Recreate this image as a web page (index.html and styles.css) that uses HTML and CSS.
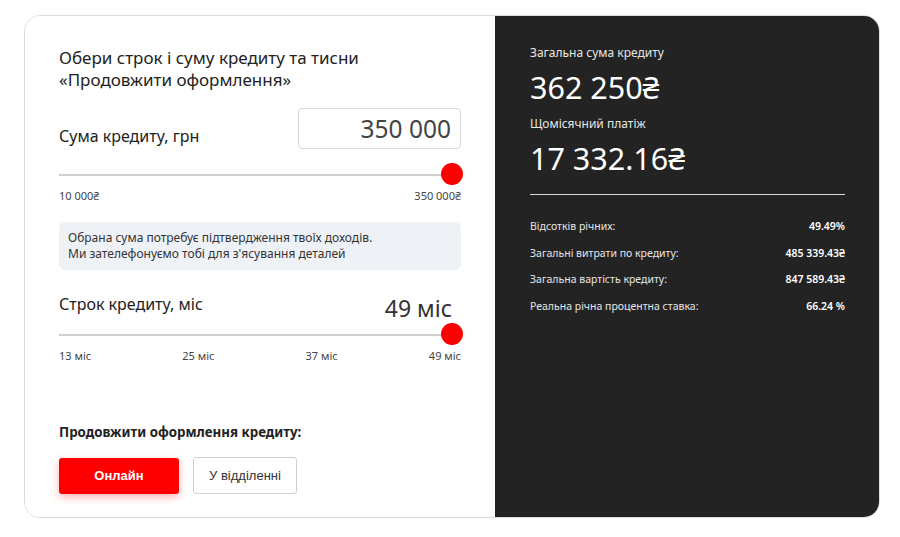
FILE: index.html
```html
<!DOCTYPE html>
<html lang="uk">
<head>
    <meta charset="UTF-8">
    <meta name="viewport" content="width=device-width, initial-scale=1.0">
    <title>Кредит</title>
    <link rel="stylesheet" href="styles.css">
</head>
<body>
    <div class="card">
        <div class="calc">
            <div class="title">Обери строк і суму кредиту та тисни<br>«Продовжити оформлення»</div>

            <div class="field-row">
                <div class="field-label">Сума кредиту, грн</div>
                <div class="amount-box">350 000</div>
            </div>
            <div class="slider">
                <div class="track"></div>
                <div class="thumb"></div>
            </div>
            <div class="ticks">
                <span>10 000₴</span>
                <span>350 000₴</span>
            </div>

            <div class="notice">
                Обрана сума потребує підтвердження твоїх доходів.<br>
                Ми зателефонуємо тобі для з'ясування деталей
            </div>

            <div class="field-row term-row">
                <div class="field-label">Строк кредиту, міс</div>
                <div class="term-value">49 міс</div>
            </div>
            <div class="slider">
                <div class="track"></div>
                <div class="thumb"></div>
            </div>
            <div class="ticks">
                <span>13 міс</span>
                <span>25 міс</span>
                <span>37 міс</span>
                <span>49 міс</span>
            </div>

            <div class="continue-label">Продовжити оформлення кредиту:</div>
            <div class="buttons">
                <div class="btn btn-red">Онлайн</div>
                <div class="btn btn-outline">У відділенні</div>
            </div>
        </div>

        <div class="summary">
            <div class="sum-label">Загальна сума кредиту</div>
            <div class="sum-value">362 250₴</div>
            <div class="sum-label">Щомісячний платіж</div>
            <div class="sum-value">17 332.16₴</div>
            <div class="divider"></div>

            <div class="detail"><span>Відсотків річних:</span><b>49.49%</b></div>
            <div class="detail"><span>Загальні витрати по кредиту:</span><b>485 339.43₴</b></div>
            <div class="detail"><span>Загальна вартість кредиту:</span><b>847 589.43₴</b></div>
            <div class="detail"><span>Реальна річна процентна ставка:</span><b>66.24 %</b></div>
        </div>
    </div>
</body>
</html>
```

FILE: styles.css
```css
* {
    margin: 0;
    padding: 0;
    box-sizing: border-box;
    font-family: 'Noto Sans', 'DejaVu Sans', sans-serif;
}

body {
    background-color: #fff;
    padding: 15px 20px 0 24px;
}

.card {
    display: flex;
    width: 856px;
    height: 503px;
    border: 1px solid #dcdcdc;
    border-radius: 16px;
    overflow: hidden;
}

.calc {
    width: 470px;
    padding: 31px 34px 0 34px;
    background: #fff;
    color: #222;
}

.title {
    font-size: 17px;
    line-height: 22px;
    margin-bottom: 17px;
}

.field-row {
    display: flex;
    justify-content: space-between;
    align-items: flex-start;
}

.field-label {
    font-size: 16px;
    line-height: 22px;
    padding-top: 17px;
    color: #222;
}

.amount-box {
    width: 163px;
    height: 41px;
    border: 1px solid #d8d8d8;
    border-radius: 4px;
    padding: 0 9px;
    font-size: 24.5px;
    line-height: 39px;
    color: #444;
    text-align: right;
}

.slider {
    position: relative;
    height: 22px;
    padding-top: 11px;
    margin-top: 14px;
}

.track {
    height: 2px;
    width: 393px;
    background: #d0d0d0;
}

.thumb {
    position: absolute;
    right: -2px;
    top: 0;
    width: 22px;
    height: 22px;
    border-radius: 50%;
    background: #ff0000;
}

.ticks {
    display: flex;
    justify-content: space-between;
    font-size: 11px;
    line-height: 15px;
    color: #444;
    margin-top: 3px;
}

.notice {
    margin-top: 19px;
    background: #eef2f7;
    border-radius: 6px;
    padding: 8px 9px;
    font-size: 12px;
    line-height: 16px;
    color: #333;
}

.term-row {
    margin-top: 23px;
}

.term-row .field-label {
    padding-top: 0;
}

.term-value {
    font-size: 23px;
    line-height: 28px;
    margin-top: 1px;
    color: #333;
    padding-right: 9px;
}

.term-row + .slider {
    margin-top: 1px;
}

.continue-label {
    margin-top: 60px;
    font-size: 13.3px;
    line-height: 18px;
    font-weight: bold;
    color: #222;
}

.buttons {
    display: flex;
    gap: 14px;
    margin-top: 16px;
    align-items: center;
}

.btn {
    height: 37px;
    display: flex;
    align-items: center;
    justify-content: center;
    font-family: 'Liberation Sans', Arial, sans-serif;
    font-size: 13px;
    border-radius: 3px;
}

.btn-red {
    width: 120px;
    height: 36px;
    background: #ff0000;
    color: #fff;
    font-weight: bold;
    box-shadow: 0 3px 8px rgba(255, 0, 0, 0.3);
}

.btn-outline {
    width: 104px;
    background: #fff;
    border: 1px solid #cfcfcf;
    color: #333;
}

.summary {
    flex: 1;
    background: #232323;
    color: #fff;
    padding: 29px 34px 0 35px;
}

.sum-label {
    font-size: 12px;
    line-height: 16px;
    color: #e6e6e6;
    margin-bottom: 9px;
}

.sum-value {
    font-size: 30.5px;
    line-height: 34px;
    margin-bottom: 12px;
}

.divider {
    height: 1px;
    background: #d8d8d8;
    margin-top: 19px;
    margin-bottom: 24px;
}

.detail {
    display: flex;
    justify-content: space-between;
    font-size: 10.5px;
    line-height: 14px;
    color: #e6e6e6;
    height: 26.5px;
}

.detail b {
    font-weight: 600;
    color: #fff;
}
```
